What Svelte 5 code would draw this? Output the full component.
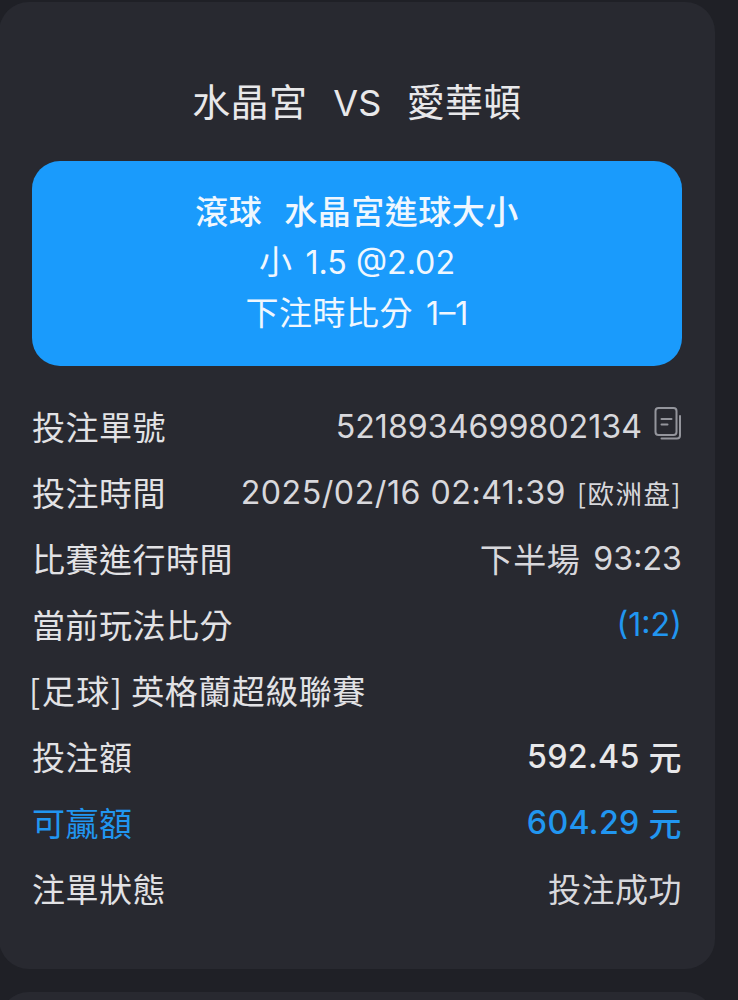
<script>
  const rows = [
    { label: '投注時間', parts: [['n wide', '2025/02/16 02:41:39']], tag: '[欧洲盘]' },
    { label: '比賽進行時間', parts: [['c gap', '下半場'], ['n', '93:23']] },
    { label: '當前玩法比分', parts: [['n', '(1:2)']], valueClass: 'blue' },
    { label: '英格蘭超級聯賽', league: '足球', parts: [] },
    { label: '投注額', parts: [['n', '592.45 '], ['c', '元']], valueClass: 'strong' },
    { label: '可贏額', parts: [['n', '604.29 '], ['c', '元']], valueClass: 'strong blue', labelClass: 'blue' },
    { label: '注單狀態', parts: [['c', '投注成功']] }
  ];
</script>

<div class="page">
  <section class="card">
    <h1 class="title">水晶宮<span class="vs">VS</span>愛華頓</h1>
    <div class="banner">
      <div class="banner-head"><span class="head-kind">滾球</span>水晶宮進球大小</div>
      <div class="banner-line">小<span class="n shift">1.5 @2.02</span></div>
      <div class="banner-line">下注時比分<span class="n shift">1–1</span></div>
    </div>
    <div class="rows">
      <div class="row">
        <span class="label">投注單號</span>
        <span class="value">
          <span class="n">5218934699802134</span>
          <svg class="copy" width="28" height="34" viewBox="0 0 28 34" fill="none" stroke="#94959c" stroke-width="2" stroke-linecap="round" stroke-linejoin="round" aria-hidden="true">
            <rect x="1.500" y="1" width="21" height="27" rx="3" />
            <path d="M7.500 12h10M7.500 17.500h6" />
            <path d="M26 9v19.500a3 3 0 0 1-3 3H7.500" />
          </svg>
        </span>
      </div>
      {#each rows as row}
        <div class="row">
          <span class="label {row.labelClass ?? ''}">{#if row.league}<span class="league">[{row.league}]</span>{/if}{row.label}</span>
          <span class="value {row.valueClass ?? ''}">{#each row.parts as part}<span class={part[0]}>{part[1]}</span>{/each}{#if row.tag}<span class="tag">{row.tag}</span>{/if}</span>
        </div>
      {/each}
    </div>
  </section>
  <section class="card next"></section>
</div>

<style>
  :global(body) {
    margin: 0;
    background: #1f2026;
  }
  .page {
    height: 1000px;
    overflow: hidden;
    padding: 2px 23px 0 0;
    font-family: "Noto Sans CJK TC", sans-serif;
    color: #e6e6e8;
  }
  .card {
    box-sizing: border-box;
    margin-left: -1px;
    height: 967px;
    padding: 0 33px;
    background: #282930;
    border-radius: 30px;
  }
  .card.next {
    height: 60px;
    margin-top: 23px;
  }
  .title {
    box-sizing: content-box;
    margin: 0;
    padding-top: 72px;
    height: 87px;
    line-height: 52px;
    font-size: 38px;
    font-weight: 400;
    letter-spacing: 0.3px;
    text-align: center;
    color: #e8e8ea;
  }
  .vs {
    margin: 0 25px 0 26px;
    font-family: "Inter", sans-serif;
    font-size: 36px;
  }
  .banner {
    height: 205px;
    box-sizing: border-box;
    padding-top: 24px;
    background: #1a9bfc;
    border-radius: 28px;
    text-align: center;
    color: #f0f7fe;
    font-size: 33px;
    line-height: 50px;
  }
  .banner-head {
    font-weight: 500;
    letter-spacing: 0.5px;
  }
  .head-kind {
    margin-right: 22px;
  }
  .banner-line {
    height: 50.500px;
    letter-spacing: 0.5px;
  }
  .rows {
    margin-top: 27px;
  }
  .row {
    display: flex;
    justify-content: space-between;
    align-items: center;
    height: 66px;
    font-size: 33px;
    letter-spacing: 0.5px;
  }
  .label {
    white-space: nowrap;
    color: #e2e2e5;
  }
  .league {
    margin: 0 8px 0 -3px;
    letter-spacing: 1.500px;
  }
  .value {
    display: flex;
    align-items: center;
    white-space: pre;
    color: #d8d8dc;
  }
  .n {
    font-family: "Inter", sans-serif;
    font-size: 32.200px;
    letter-spacing: 0;
  }
  .n.shift {
    margin-left: 13px;
  }
  .n.wide {
    letter-spacing: 0.5px;
  }
  .gap {
    margin-right: 13px;
  }
  .strong {
    font-weight: 500;
    color: #e8e8ea;
  }
  .strong .n {
    letter-spacing: 0.3px;
  }
  .label.blue,
  .value.blue {
    color: #2196f0;
  }
  .tag {
    margin-left: 11px;
    font-size: 26.500px;
    letter-spacing: 1.500px;
  }
  .copy {
    margin-left: 12px;
    margin-top: -5px;
  }
</style>
